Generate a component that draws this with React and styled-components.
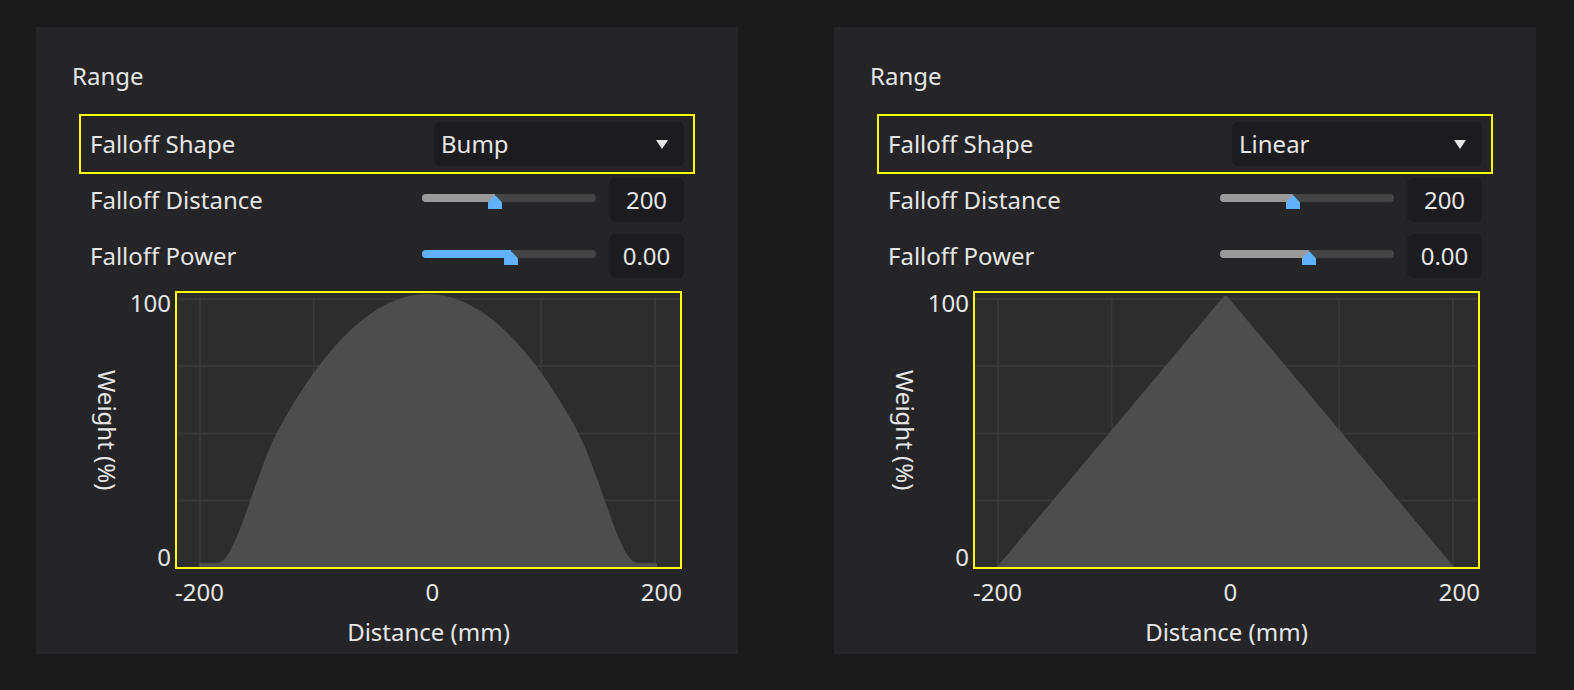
import React from "react";
import styled, { createGlobalStyle } from "styled-components";

const GlobalStyle = createGlobalStyle`
    body {
        margin: 0;
        background: #1b1b1b;
        font-family: "Noto Sans", "Open Sans", sans-serif;
        color: #e6e6e6;
    }
`;

// plot inner size (inside the 2px yellow frame)
const PW = 503;
const PH = 274;
const CX = 250.5;
const gridX = [23, 136.75, 250.5, 364.25, 478];
const gridY = [6, 73, 140.5, 207.5];

// bump falloff: parabola that eases into a flat foot
function bump(u) {
    if (u >= 1) return 0;
    let f = 1 - u * u;
    if (u > 0.7) f *= 1 - Math.pow((u - 0.7) / 0.3, 2.25);
    return f;
}

function bumpCurve() {
    const base = 270;
    const height = 269;
    const half = 210;
    const pts = [];
    for (let d = -half; d <= half; d += 2) {
        pts.push(`${(CX + d).toFixed(1)},${(base - height * bump(Math.abs(d) / half)).toFixed(1)}`);
    }
    return `M22,274 L22,${base} L${pts.join(" L")} L480,${base} L480,274 Z`;
}

const bumpPath = bumpCurve();
const linearPath = "M22,274 L249,3 L252,3 L479,274 Z";

function Panel({ shape, powerActive, curve }) {
    return (
        <PanelStyled>
            <Title>Range</Title>
            <Row $highlight>
                <Label>Falloff Shape</Label>
                <Select>
                    <span>{shape}</span>
                    <svg width="12" height="9" viewBox="0 0 12 9">
                        <polygon points="0,0 12,0 6,9" fill="#e6e6e6" />
                    </svg>
                </Select>
            </Row>
            <Row>
                <Label>Falloff Distance</Label>
                <Slider value={0.42} />
                <ValueBox>200</ValueBox>
            </Row>
            <Row>
                <Label>Falloff Power</Label>
                <Slider value={0.511} active={powerActive} />
                <ValueBox>0.00</ValueBox>
            </Row>
            <Chart>
                <AxisTitle>Weight (%)</AxisTitle>
                <YTicks>
                    <span>100</span>
                    <span>0</span>
                </YTicks>
                <Plot>
                    <svg width={PW} height={PH} viewBox={`0 0 ${PW} ${PH}`}>
                        {gridX.map((x) => (
                            <line key={"x" + x} x1={x} y1={4} x2={x} y2={PH} stroke="#383838" strokeWidth="2" />
                        ))}
                        {gridY.map((y) => (
                            <line key={"y" + y} x1={0} y1={y} x2={PW} y2={y} stroke="#383838" strokeWidth="2" />
                        ))}
                        <path d={curve} fill="#4d4d4d" />
                    </svg>
                </Plot>
                <XTicks>
                    <span>-200</span>
                    <span>0</span>
                    <span>200</span>
                </XTicks>
                <XTitle>Distance (mm)</XTitle>
            </Chart>
        </PanelStyled>
    );
}

function Slider({ value, active }) {
    const pct = `${value * 100}%`;
    return (
        <SliderStyled>
            <Track>
                <Fill $active={active} style={{ width: pct }} />
                <Thumb style={{ left: `calc(${pct} - 7px)` }} width="14" height="14" viewBox="0 0 14 14">
                    <path d="M7 0.4 Q7.7 0.4 8.3 1.2 L14 7.6 V14 H0 V7.6 L5.7 1.2 Q6.3 0.4 7 0.4 Z" fill="#62b1ff" />
                </Thumb>
            </Track>
        </SliderStyled>
    );
}

export default function App() {
    return (
        <>
            <GlobalStyle />
            <Page>
                <Panel shape="Bump" powerActive curve={bumpPath} />
                <Panel shape="Linear" curve={linearPath} />
            </Page>
        </>
    );
}

const Page = styled.div`
    display: flex;
    gap: 96px;
    padding: 27px 0 0 36px;
`;

const PanelStyled = styled.section`
    width: 702px;
    height: 627px;
    box-sizing: border-box;
    background: #252527;
    padding: 37px 36px 10px;
    font-size: 24px;
    line-height: 24px;
`;

const Title = styled.div`
    margin-bottom: 28px;
`;

const Row = styled.div`
    display: flex;
    align-items: center;
    height: 56px;
    box-sizing: border-box;
    padding: 6px 9px;
    margin: 0 9px;
    outline: ${(p) => (p.$highlight ? "2px solid #ffff00" : "none")};
`;

const Label = styled.div`
    flex: 1;
`;

const Select = styled.div`
    width: 250px;
    height: 44px;
    box-sizing: border-box;
    display: flex;
    align-items: center;
    justify-content: space-between;
    padding: 0 16px 0 7px;
    background: #1c1c1e;
    border-radius: 6px;
`;

const SliderStyled = styled.div`
    width: 174px;
    height: 44px;
    margin-right: 13px;
`;

const Track = styled.div`
    position: relative;
    margin-top: 16px;
    height: 8px;
    border-radius: 4px;
    background: #454545;
`;

const Fill = styled.div`
    position: absolute;
    left: 0;
    top: 0;
    bottom: 0;
    border-radius: 4px 0 0 4px;
    background: ${(p) => (p.$active ? "#62b1ff" : "#9a9a9a")};
`;

const Thumb = styled.svg`
    position: absolute;
    top: 1px;
    display: block;
`;

const ValueBox = styled.div`
    width: 75px;
    height: 44px;
    display: flex;
    align-items: center;
    justify-content: center;
    background: #1c1c1e;
    border-radius: 6px;
`;

const Chart = styled.div`
    display: grid;
    grid-template-columns: 34px 51px 507px;
    grid-template-rows: 278px auto auto;
    margin: 7px 0 0 18px;
`;

const AxisTitle = styled.div`
    grid-column: 1;
    grid-row: 1;
    writing-mode: vertical-rl;
    align-self: center;
    justify-self: center;
`;

const YTicks = styled.div`
    grid-column: 2;
    grid-row: 1;
    display: flex;
    flex-direction: column;
    justify-content: space-between;
    align-items: flex-end;
    padding-right: 4px;
`;

const Plot = styled.div`
    grid-column: 3;
    grid-row: 1;
    box-sizing: border-box;
    border: 2px solid #ffff00;
    background: #2d2d2d;
    svg {
        display: block;
    }
`;

const XTicks = styled.div`
    grid-column: 3;
    grid-row: 2;
    display: flex;
    justify-content: space-between;
    margin-top: 11px;
`;

const XTitle = styled.div`
    grid-column: 3;
    grid-row: 3;
    text-align: center;
    margin-top: 16px;
`;
